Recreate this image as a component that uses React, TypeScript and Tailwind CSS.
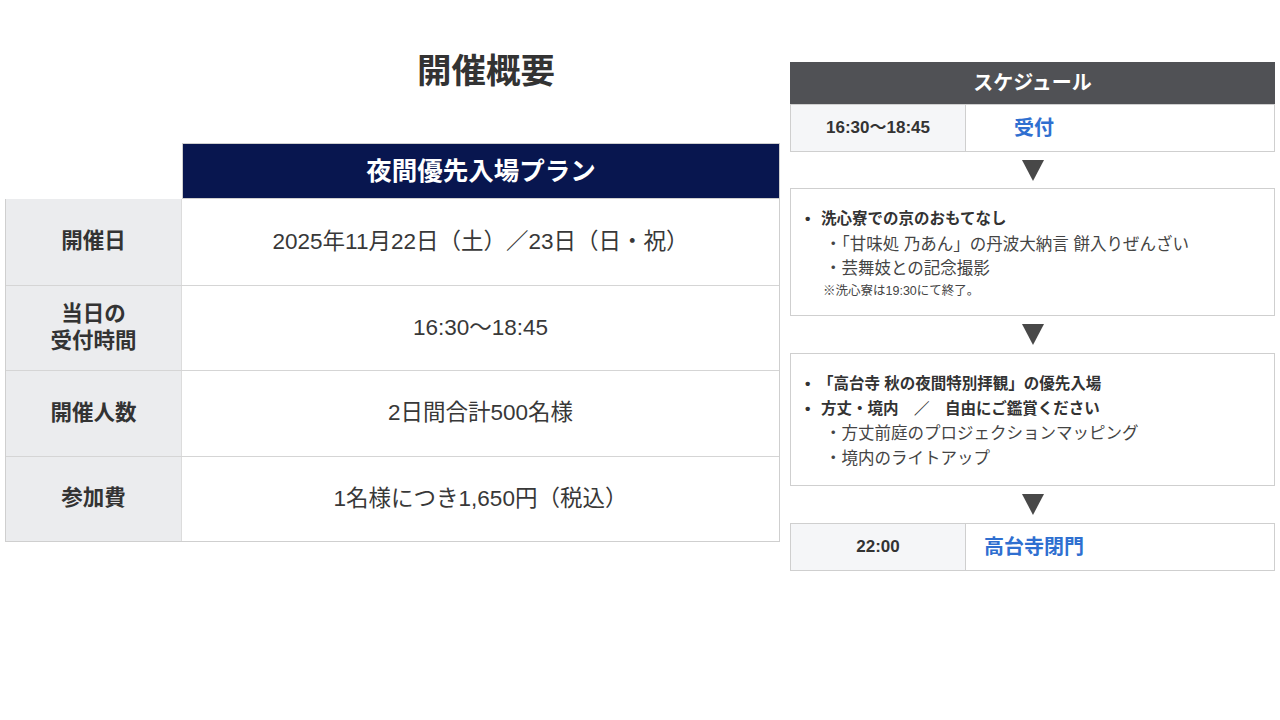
import React from 'react';

const font = { fontFamily: '"Liberation Sans", "Noto Sans CJK JP", sans-serif' };

const rows: { label: React.ReactNode; value: string }[] = [
  { label: '開催日', value: '2025年11月22日（土）／23日（日・祝）' },
  { label: <>当日の<br />受付時間</>, value: '16:30〜18:45' },
  { label: '開催人数', value: '2日間合計500名様' },
  { label: '参加費', value: '1名様につき1,650円（税込）' },
];

const Arrow = ({ h }: { h: string }) => (
  <div className={`flex items-center justify-center ${h}`}>
    <div className="w-0 h-0 border-l-[11px] border-r-[11px] border-t-[21px] border-l-transparent border-r-transparent border-t-[#484848]" />
  </div>
);

const TimeRow = ({ time, title }: { time: string; title: string }) => (
  <div className="flex h-[48px] border border-[#cfcfcf]">
    <div className="w-[175px] bg-[#f5f6f8] border-r border-[#cfcfcf] flex items-center justify-center text-[17px] font-bold text-[#333]">
      {time}
    </div>
    <div className="flex items-center">
      <div className="w-[136px] text-center text-[20px] font-bold text-[#2f6fd0]">{title}</div>
    </div>
  </div>
);

const App: React.FC = () => {
  return (
    <div className="w-[1280px] h-[720px] bg-white text-[#333] flex" style={font}>
      {/* Left: overview table */}
      <div className="w-[775px] ml-[5px] pt-[50px]">
        <h1 className="h-[44px] flex items-center justify-center pl-[187px] text-[34.5px] font-bold text-[#333]">
          開催概要
        </h1>
        <div className="mt-[49px] ml-[177px] h-[56px] bg-[#08164f] border border-[#cfcfcf] flex items-center justify-center text-white text-[25.5px] font-bold">
          夜間優先入場プラン
        </div>
        <div className="border border-t-0 border-[#cfcfcf]">
          {rows.map((r, i) => (
            <div key={i} className={`flex h-[85.5px] ${i > 0 ? 'border-t border-[#d5d5d5]' : ''}`}>
              <div className="w-[176px] bg-[#ebecee] border-r border-[#dcdcdc] flex items-center justify-center text-center text-[21.5px] leading-[27px] font-bold text-[#333]">
                {r.label}
              </div>
              <div className="flex-1 flex items-center justify-center text-[22.5px] text-[#383838]">{r.value}</div>
            </div>
          ))}
        </div>
      </div>

      {/* Right: schedule */}
      <div className="w-[485px] ml-[10px] pt-[62px]">
        <div className="h-[42px] bg-[#505155] flex items-center justify-center text-white text-[20px] font-bold">
          スケジュール
        </div>
        <TimeRow time="16:30〜18:45" title="受付" />
        <Arrow h="h-[36px]" />
        <div className="h-[128px] border border-[#cfcfcf] pt-[18px] pl-[14px]">
          <ul className="leading-[24.5px]">
            <li className="flex text-[15.5px] font-bold text-[#333]"><span className="w-[16px]">•</span>洗心寮での京のおもてなし</li>
            <li className="pl-[20px] text-[16.5px] text-[#444]">・「甘味処 乃あん」の丹波大納言 餅入りぜんざい</li>
            <li className="pl-[20px] text-[16.5px] text-[#444]">・芸舞妓との記念撮影</li>
          </ul>
          <p className="pl-[18px] text-[12.5px] leading-[20px] text-[#444]">※洗心寮は19:30にて終了。</p>
        </div>
        <Arrow h="h-[37px]" />
        <div className="h-[133px] border border-[#cfcfcf] pt-[18px] pl-[14px]">
          <ul className="leading-[24.5px]">
            <li className="flex text-[15.5px] font-bold text-[#333]"><span className="w-[13px]">•</span>「高台寺 秋の夜間特別拝観」の優先入場</li>
            <li className="flex text-[15.5px] font-bold text-[#333]"><span className="w-[16px]">•</span>方丈・境内　／　自由にご鑑賞ください</li>
            <li className="pl-[20px] text-[16.5px] text-[#444]">・方丈前庭のプロジェクションマッピング</li>
            <li className="pl-[20px] text-[16.5px] text-[#444]">・境内のライトアップ</li>
          </ul>
        </div>
        <Arrow h="h-[37px]" />
        <TimeRow time="22:00" title="高台寺閉門" />
      </div>
    </div>
  );
};

export default App;
